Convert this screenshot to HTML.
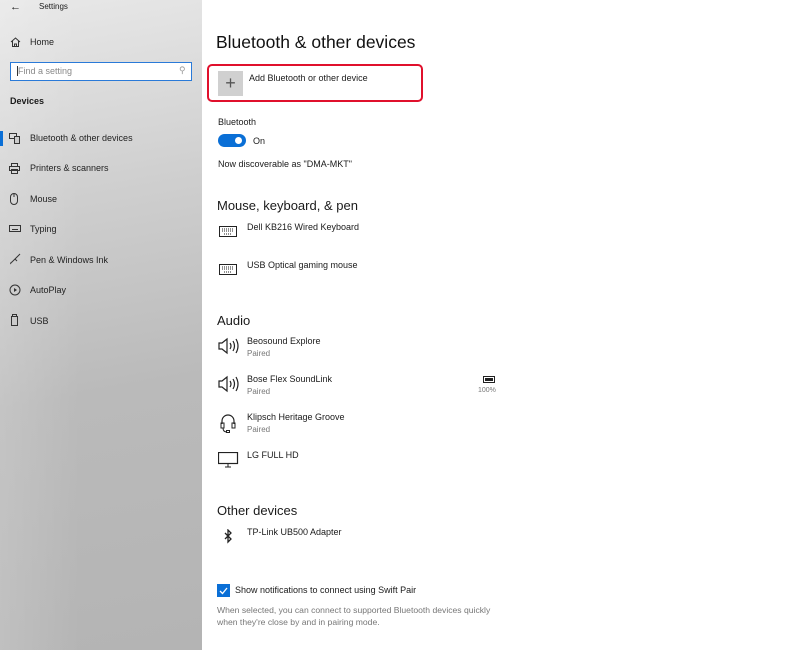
<!DOCTYPE html>
<html><head><meta charset="utf-8"><style>
*{margin:0;padding:0;box-sizing:border-box}
body{width:800px;height:650px;overflow:hidden;background:#fff;font-family:"Liberation Sans",sans-serif;color:#1a1a1a;position:relative}
.side{position:absolute;left:0;top:0;width:202px;height:650px;background:linear-gradient(90deg,rgba(255,255,255,0.15),rgba(255,255,255,0) 40%),linear-gradient(170deg,#e8e8e8 0%,#cfcfcf 30%,#bababa 60%,#b4b4b4 100%)}
.a{position:absolute;white-space:nowrap}
.s{font-size:9px}
.n{font-size:9px;color:#222}
.g{color:#777;font-size:8px}
svg{position:absolute}
</style></head><body>
<div class="side"></div>
<div class="a" style="left:10px;top:1px;font-size:11px">&#8592;</div>
<div class="a s" style="left:39px;top:2px;font-size:8px">Settings</div>
<svg style="left:10px;top:37px" width="11" height="10" viewBox="0 0 11 10"><path d="M1 5 5.5 1 10 5M2.5 4v5.5h6V4M4.5 9.5V7h2v2.5" fill="none" stroke="#333" stroke-width="1"/></svg>
<div class="a n" style="left:30px;top:37px">Home</div>
<div class="a" style="left:10px;top:62px;width:182px;height:19px;background:#fff;border:1.5px solid #2a7ad8"></div>
<div class="a" style="left:17px;top:66px;width:1px;height:10px;background:#333"></div>
<div class="a" style="left:18px;top:66px;font-size:9px;color:#888">Find a setting</div>
<div class="a" style="left:179px;top:65px;font-size:9px;color:#999">&#9906;</div>
<div class="a" style="left:10px;top:96px;font-size:9px;font-weight:bold">Devices</div>
<div class="a" style="left:0;top:131px;width:3px;height:15px;background:#0a6fd6"></div>
<svg style="left:9px;top:133px" width="12" height="11"><rect x="0.5" y="0.5" width="7" height="5" fill="none" stroke="#333"/><rect x="5.5" y="3.5" width="5" height="7" fill="#ccc" stroke="#333"/></svg>
<div class="a n" style="left:30px;top:133px">Bluetooth &amp; other devices</div>
<svg style="left:9px;top:163px" width="12" height="11"><rect x="2.5" y="0.5" width="6" height="3" fill="none" stroke="#333"/><rect x="0.5" y="3.5" width="10" height="4" fill="none" stroke="#333"/><rect x="2.5" y="6.5" width="6" height="4" fill="none" stroke="#333"/></svg>
<div class="a n" style="left:30px;top:163px">Printers &amp; scanners</div>
<svg style="left:10px;top:193px" width="8" height="12"><rect x="0.5" y="0.5" width="7" height="11" rx="3.5" fill="none" stroke="#333"/><path d="M4 1v3" stroke="#333"/></svg>
<div class="a n" style="left:30px;top:194px">Mouse</div>
<svg style="left:9px;top:225px" width="12" height="8"><rect x="0.5" y="0.5" width="11" height="6" fill="none" stroke="#333"/><path d="M3 4.5h6" stroke="#333"/></svg>
<div class="a n" style="left:30px;top:224px">Typing</div>
<svg style="left:9px;top:253px" width="12" height="12"><path d="M11 1 5 7M5 7 3 9q-2 1-1 2M6 6l2 2" fill="none" stroke="#333"/></svg>
<div class="a n" style="left:30px;top:255px">Pen &amp; Windows Ink</div>
<svg style="left:9px;top:284px" width="12" height="12"><circle cx="6" cy="6" r="5" fill="none" stroke="#333"/><path d="M5 4v4l3-2z" fill="#333"/></svg>
<div class="a n" style="left:30px;top:285px">AutoPlay</div>
<svg style="left:11px;top:314px" width="7" height="12"><rect x="0.5" y="2.5" width="6" height="9" fill="none" stroke="#333"/><rect x="1.5" y="0.5" width="4" height="2" fill="none" stroke="#333"/></svg>
<div class="a n" style="left:30px;top:316px">USB</div>

<div class="a" style="left:216px;top:32px;font-size:17.5px;color:#111">Bluetooth &amp; other devices</div>
<div class="a" style="left:207px;top:64px;width:216px;height:38px;border:2px solid #e0102c;border-radius:5px"></div>
<div class="a" style="left:218px;top:71px;width:25px;height:25px;background:#d0d0d0;color:#555;font-size:18px;text-align:center;line-height:24px">+</div>
<div class="a s" style="left:249px;top:73px">Add Bluetooth or other device</div>
<div class="a s" style="left:218px;top:117px">Bluetooth</div>
<div class="a" style="left:218px;top:134px;width:28px;height:13px;background:#0a6fd6;border-radius:7px"></div>
<div class="a" style="left:235px;top:137px;width:7px;height:7px;background:#fff;border-radius:50%"></div>
<div class="a s" style="left:253px;top:136px">On</div>
<div class="a s" style="left:218px;top:159px">Now discoverable as "DMA-MKT"</div>

<div class="a" style="left:217px;top:198px;font-size:13px">Mouse, keyboard, &amp; pen</div>
<svg style="left:219px;top:226px" width="18" height="11"><rect x="0.5" y="0.5" width="17" height="10" fill="none" stroke="#222"/><path d="M3 3h12M3 5h12M5 8h8" stroke="#222" stroke-dasharray="1 1"/></svg>
<div class="a s" style="left:247px;top:222px">Dell KB216 Wired Keyboard</div>
<svg style="left:219px;top:264px" width="18" height="11"><rect x="0.5" y="0.5" width="17" height="10" fill="none" stroke="#222"/><path d="M3 3h12M3 5h12M5 8h8" stroke="#222" stroke-dasharray="1 1"/></svg>
<div class="a s" style="left:247px;top:260px">USB Optical gaming mouse</div>

<div class="a" style="left:217px;top:313px;font-size:13px">Audio</div>
<svg style="left:218px;top:337px" width="22" height="18"><path d="M1 6h3l5-4v14l-5-4H1z M12 6q2 3 0 6M15 4q3 5 0 10M18 2q4 7 0 14" fill="none" stroke="#222" stroke-width="1.2"/></svg>
<div class="a s" style="left:247px;top:336px">Beosound Explore</div>
<div class="a g" style="left:247px;top:349px">Paired</div>
<svg style="left:218px;top:375px" width="22" height="18"><path d="M1 6h3l5-4v14l-5-4H1z M12 6q2 3 0 6M15 4q3 5 0 10M18 2q4 7 0 14" fill="none" stroke="#222" stroke-width="1.2"/></svg>
<div class="a s" style="left:247px;top:374px">Bose Flex SoundLink</div>
<div class="a g" style="left:247px;top:387px">Paired</div>
<svg style="left:483px;top:376px" width="13" height="7"><rect x="0.5" y="0.5" width="11" height="6" fill="none" stroke="#222"/><rect x="2" y="2" width="8" height="3" fill="#222"/></svg>
<div class="a" style="left:478px;top:387px;font-size:7px;color:#777">100%</div>
<svg style="left:219px;top:412px" width="18" height="22"><path d="M3 12V9a6 6 0 0 1 12 0v3" fill="none" stroke="#222" stroke-width="1.2"/><rect x="2" y="11" width="3" height="5" fill="none" stroke="#222"/><rect x="13" y="11" width="3" height="5" fill="none" stroke="#222"/><path d="M4 16q0 4 4 4" fill="none" stroke="#222"/><rect x="7.5" y="18.5" width="3" height="2" fill="none" stroke="#222"/></svg>
<div class="a s" style="left:247px;top:412px">Klipsch Heritage Groove</div>
<div class="a g" style="left:247px;top:425px">Paired</div>
<svg style="left:218px;top:452px" width="21" height="16"><rect x="0.5" y="0.5" width="19" height="11" fill="none" stroke="#222" stroke-width="1.2"/><path d="M10 12v3M7 15h6" stroke="#222"/></svg>
<div class="a s" style="left:247px;top:450px">LG FULL HD</div>

<div class="a" style="left:217px;top:503px;font-size:13px">Other devices</div>
<svg style="left:224px;top:529px" width="9" height="15"><path d="M1 4l6 6-3 3V1l3 3-6 6" fill="none" stroke="#222" stroke-width="1.3"/></svg>
<div class="a s" style="left:247px;top:527px">TP-Link UB500 Adapter</div>
<div class="a" style="left:217px;top:584px;width:13px;height:13px;background:#0a6fd6"></div>
<svg style="left:218px;top:585px" width="11" height="11"><path d="M2 6l2.5 2.5L9 3" fill="none" stroke="#fff" stroke-width="1.3"/></svg>
<div class="a s" style="left:235px;top:585px">Show notifications to connect using Swift Pair</div>
<div class="a" style="left:217px;top:604px;font-size:8.6px;color:#777;line-height:12px">When selected, you can connect to supported Bluetooth devices quickly<br>when they're close by and in pairing mode.</div>
</body></html>
